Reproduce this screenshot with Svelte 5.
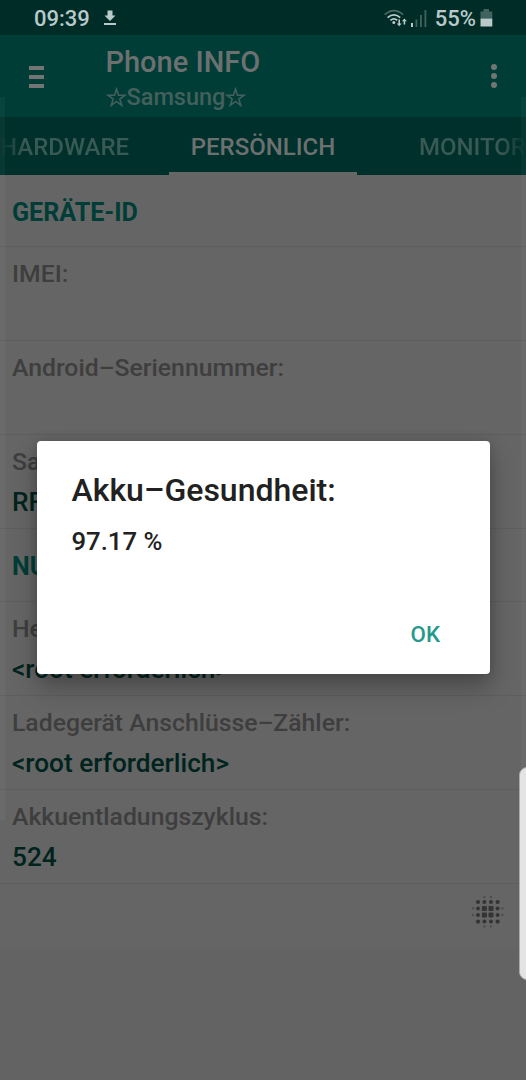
<script lang="ts">
	const tabs = ['HARDWARE', 'PERSÖNLICH', 'MONITOR'];

	const rows = [
		{ heading: 'GERÄTE-ID' },
		{ label: 'IMEI:', value: '' },
		{ label: 'Android–Seriennummer:', value: '' },
		{ label: 'Sa', value: 'RF' },
		{ heading: 'NU' },
		{ label: 'He', value: '<root erforderlich>' },
		{ label: 'Ladegerät Anschlüsse–Zähler:', value: '<root erforderlich>' },
		{ label: 'Akkuentladungszyklus:', value: '524' }
	];

	// x, y, diameter of each dot in the halftone logo
	const dots: number[][] = [];
	const pos = [2, 7, 13.4, 20, 26.6, 31.4];
	const sizes = [
		[0, 0, 2.4, 2.4, 0, 0],
		[0, 4.2, 4, 4, 4.2, 0],
		[2.4, 4, 5, 5, 4, 2.4],
		[2.4, 4, 5, 5, 4, 2.4],
		[0, 4.2, 4, 4, 4.2, 0],
		[0, 0, 2.4, 2.4, 0, 0]
	];
	sizes.forEach((line, r) =>
		line.forEach((s, c) => {
			if (s) dots.push([pos[c], pos[r], s]);
		})
	);

	let selected = $state(1);
	let open = $state(true);
</script>

<div class="phone">
	<div class="status">
		<span class="clock">09:39</span>
		<svg class="download" width="14" height="16" viewBox="0 0 14 16">
			<path d="M4.5 0.5h5v5h3L7 11 1.5 5.500h3zM1 13h12v2H1z" />
		</svg>
		<svg class="wifi" width="24" height="18" viewBox="0 0 24 18">
			<g fill="none" stroke-width="1.8">
				<path d="M.7 5.600Q9.900-2.400 19.100 5.600" opacity=".4" />
				<path d="M3.600 8.600Q9.900 3.200 16.200 8.600M6.400 11.400Q9.900 8.500 13.200 11.300" />
			</g>
			<circle cx="9.800" cy="13.500" r="1.500" />
			<path d="M14.400 10.500h1.600v4h1.700l-2.500 2.800-2.500-2.800h1.700zM19.600 15.500h1.600v-3.300h1.700l-2.500-2.800-2.500 2.800h1.700z" />
		</svg>
		<svg class="signal" width="16" height="17" viewBox="0 0 16 17">
			<path d="M0 13h2v4H0z" />
			<path d="M4.500 9.500h1.800V17H4.500zM9 5h1.800v12H9zM13.500 0h1.800v17h-1.800z" opacity=".35" />
		</svg>
		<span class="percent">55%</span>
		<svg class="battery" width="13" height="18" viewBox="0 0 13 18">
			<path d="M3.500 0h5.500v2.500h3.300V9.500H.5V2.500h3z" opacity=".35" />
			<path d="M.5 9.500h11.800V17.500H.5z" />
		</svg>
	</div>

	<header>
		<svg class="menu" width="15" height="22" viewBox="0 0 15 22">
			<path d="M0 0h15v4H0zM0 9h15v4H0zM0 18h15v4H0z" />
		</svg>
		<div class="titles">
			<h1>Phone INFO</h1>
			<div class="subtitle">
				{@render star()}<span>Samsung</span>{@render star()}
			</div>
		</div>
		<svg class="more" width="6" height="24" viewBox="0 0 6 24">
			<circle cx="3" cy="3" r="3" />
			<circle cx="3" cy="12" r="3" />
			<circle cx="3" cy="21" r="3" />
		</svg>
	</header>

	<nav>
		{#each tabs as tab, i}
			<button class:active={selected === i} onclick={() => (selected = i)}>{tab}</button>
		{/each}
	</nav>

	<main>
		{#each rows as row}
			{#if row.heading}
				<h2>{row.heading}</h2>
			{:else}
				<div class="row">
					<div class="label">{row.label}</div>
					<div class="value">{row.value}</div>
				</div>
			{/if}
		{/each}
		<div class="logo">
			<svg width="33" height="33" viewBox="0 0 33 33">
				{#each dots as [x, y, s]}
					<rect x={x - s / 2} y={y - s / 2} width={s} height={s} rx={s === 5 ? 1 : s / 2} opacity={s < 3 ? 0.45 : 1} />
				{/each}
			</svg>
		</div>
	</main>

	<div class="edge left"></div>
	<div class="edge right"></div>

	{#if open}
		<div class="dialog" role="dialog">
			<h3>Akku–Gesundheit:</h3>
			<p>97.17 %</p>
			<button onclick={() => (open = false)}>OK</button>
		</div>
	{/if}
	<div class="handle"></div>
</div>

{#snippet star()}
	<svg class="star" width="21" height="20" viewBox="0 0 21 20">
		<path d="M10.500 2l2 6.200H19l-5.200 3.900 2 6.300-5.300-3.900-5.300 3.900 2-6.300L2 8.200h6.500z" />
	</svg>
{/snippet}

<style>
	:global(body) {
		margin: 0;
		background: #656565;
	}

	.phone {
		position: relative;
		width: 526px;
		height: 1080px;
		overflow: hidden;
		background: #636363;
		font-family: Roboto, sans-serif;
		font-weight: 500;
	}

	h1, h2, h3, p {
		margin: 0;
		font-weight: 500;
	}

	button {
		border: 0;
		padding: 0;
		background: none;
		font: inherit;
	}

	svg {
		display: block;
		flex: none;
	}

	.status {
		display: flex;
		align-items: center;
		box-sizing: border-box;
		height: 35px;
		padding: 1px 33px 0 34px;
		background: #002c28;
		color: #b9cac8;
		fill: #b9cac8;
		stroke: none;
		font-size: 22px;
	}

	.download { margin-left: 13px; }
	.wifi { margin-left: auto; }
	.wifi g { stroke: #b9cac8; }
	.signal { margin-left: 3px; }
	.percent { margin-left: 8px; }
	.battery { margin-left: 4px; }

	header {
		display: flex;
		box-sizing: border-box;
		height: 82px;
		padding: 0 29px;
		background: #003d36;
		fill: #737575;
	}

	.menu { margin-top: 31px; }

	.titles {
		flex: 1;
		margin-left: 61.5px;
		padding-top: 8px;
	}

	h1 {
		font-size: 29px;
		line-height: 38px;
		color: #6c7070;
	}

	.subtitle {
		display: flex;
		align-items: center;
		font-size: 23.5px;
		line-height: 32px;
		color: #43605c;
	}

	.star {
		fill: none;
		stroke: #43605c;
		stroke-width: 1.5;
	}

	.more { margin-top: 29px; }

	nav {
		display: flex;
		height: 58px;
		background: #00302b;
		overflow: hidden;
	}

	nav button {
		box-sizing: border-box;
		flex: none;
		height: 58px;
		padding-top: 5px;
		border-bottom: 3px solid transparent;
		font-size: 24px;
		color: #395955;
	}

	nav button:first-child {
		width: 169px;
		padding-right: 40px;
		text-align: right;
		/* fading edge of the scrollable tab strip */
		mask-image: linear-gradient(90deg, transparent, #000 24px);
	}

	nav button.active {
		width: 188px;
		color: #6c7070;
		border-color: #676767;
	}

	nav button:last-child {
		width: 169px;
		padding-left: 62px;
		text-align: left;
		mask-image: linear-gradient(270deg, transparent, #000 24px);
	}

	main {
		background: #656565;
	}

	h2, .row {
		box-sizing: border-box;
		padding-left: 12px;
		border-bottom: 1px solid #5e5e5e;
	}

	h2 {
		height: 72.45px;
		padding-top: 2px;
		font-size: 25.1px;
		font-weight: 700;
		line-height: 72px;
		color: #003d36;
	}

	.row {
		height: 94px;
		padding-top: 7px;
		font-size: 24.75px;
		line-height: 40px;
	}

	.label { color: #3e3e3e; }

	.value {
		font-size: 26.2px;
		color: #00241d;
	}

	.logo {
		display: flex;
		justify-content: flex-end;
		box-sizing: border-box;
		height: 65px;
		padding: 11.5px 22px 0 0;
		fill: #343434;
	}

	.edge {
		position: absolute;
		top: 97px;
		width: 5px;
		height: 723px;
		background: rgba(255, 255, 255, 0.035);
	}

	.left { left: 0; }
	.right { right: 0; }

	.dialog {
		position: absolute;
		top: 441px;
		left: 36.5px;
		box-sizing: border-box;
		width: 453px;
		height: 233px;
		padding: 29px 49.5px 0 35px;
		border-radius: 4px;
		background: #fff;
		box-shadow: 0 14px 24px rgba(0, 0, 0, 0.26), 0 0 12px rgba(0, 0, 0, 0.15);
		color: #212121;
	}

	h3 {
		font-size: 32px;
		line-height: 40px;
	}

	.dialog p {
		margin-top: 11px;
		font-size: 25.7px;
		line-height: 40px;
	}

	.dialog button {
		display: block;
		margin: 58px 0 0 auto;
		font-size: 22.3px;
		line-height: 31px;
		color: #26998b;
	}

	.handle {
		position: absolute;
		top: 767px;
		right: -11px;
		width: 18px;
		height: 213px;
		border: 1px solid #aaa;
		box-sizing: border-box;
		border-radius: 8px;
		background: #e4e4e4;
	}
</style>
